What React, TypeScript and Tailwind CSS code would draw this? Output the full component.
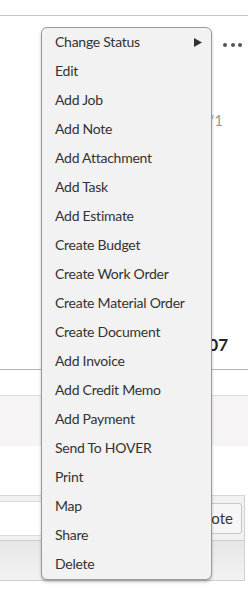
import { useState } from "react";

const ITEMS = [
  "Change Status",
  "Edit",
  "Add Job",
  "Add Note",
  "Add Attachment",
  "Add Task",
  "Add Estimate",
  "Create Budget",
  "Create Work Order",
  "Create Material Order",
  "Create Document",
  "Add Invoice",
  "Add Credit Memo",
  "Add Payment",
  "Send To HOVER",
  "Print",
  "Map",
  "Share",
  "Delete",
];

function ActionsMenu({ onPick }: { onPick: (item: string) => void }) {
  return (
    <div className="absolute left-[41px] top-[27px] z-10 w-[171px] rounded-[6px] border border-[#9a9a9a] bg-[#f2f2f2] shadow-[0_2px_3px_rgba(0,0,0,0.25)]">
      {ITEMS.map((item) => (
        <button
          key={item}
          type="button"
          onClick={() => onPick(item)}
          className="flex h-[29px] w-full items-center justify-between pb-[2px] pl-[13px] pr-[9px] text-left text-[14px] tracking-[-0.25px] text-[#333]"
        >
          <span>{item}</span>
          {item === "Change Status" && (
            <svg width="8" height="9" viewBox="0 0 8 9" className="mt-[1px]">
              <path d="M0 0 L8 4.5 L0 9 Z" fill="#333" />
            </svg>
          )}
        </button>
      ))}
    </div>
  );
}

export default function App() {
  const [, setPicked] = useState<string | null>(null);

  return (
    <div className="relative h-[600px] w-[248px] overflow-hidden bg-white font-['Lato','Open_Sans',sans-serif]">
      <div className="h-[16px] border-b border-[#c4c4c4]" />

      {/* job summary, mostly hidden behind the menu */}
      <div className="flex h-[354px] flex-col border-b border-[#b4b4b4]">
        <div className="flex justify-end gap-[3.5px] pr-[6px] pt-[27px]">
          <span className="h-[4px] w-[4px] rounded-full bg-[#555]" />
          <span className="h-[4px] w-[4px] rounded-full bg-[#555]" />
          <span className="h-[4px] w-[4px] rounded-full bg-[#555]" />
        </div>
        <div className="mt-[64px] flex justify-end pr-[25px] text-[15px] leading-[18px] text-[#999]">
          1/1
        </div>
        <div className="mt-[206px] flex justify-end pr-[20px] text-[17px] font-bold leading-[20px] text-[#222]">
          0107
        </div>
      </div>

      <div className="h-[25px]" />
      <div className="h-[51px] border-t border-[#dcdcdc] bg-[#f6f4f4]" />
      <div className="h-[49px]" />

      {/* notes panel */}
      <div className="w-[245px] border-r border-[#d0d0d0]">
        <div className="flex h-[45px] items-center gap-[4px] border-t border-[#d8d8d8] bg-[#f1f1f1] pr-[2px]">
          <div className="h-[35px] flex-1 border-y border-r border-[#dadada] bg-white" />
          <button
            type="button"
            className="h-[31px] rounded-[3px] border border-[#c8c8c8] bg-[#f6f6f6] px-[8px] text-[15px] text-[#333]"
          >
            Add Note
          </button>
        </div>
        <div className="h-[41px] border-y border-[#cfcfcf] bg-gradient-to-b from-[#e6e6e6] to-[#f3f3f3]" />
      </div>

      <ActionsMenu onPick={setPicked} />
    </div>
  );
}
